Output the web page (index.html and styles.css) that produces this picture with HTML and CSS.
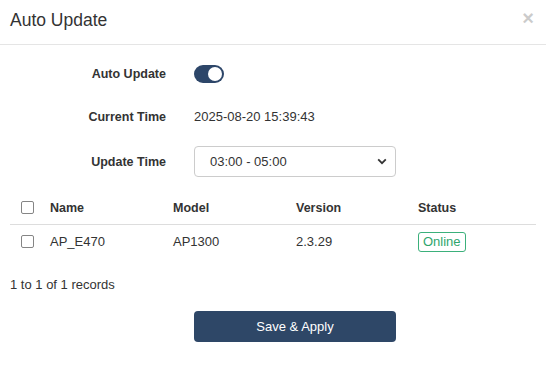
FILE: index.html
```html
<!DOCTYPE html>
<html lang="en">
<head>
  <meta charset="UTF-8">
  <title>Auto Update</title>
  <link rel="stylesheet" href="styles.css">
</head>
<body>
  <div class="modal">
    <div class="modal-header">
      <h4 class="modal-title">Auto Update</h4>
      <button class="close" type="button">&times;</button>
    </div>
    <div class="modal-body">
      <div class="form-row row-toggle">
        <label class="form-label">Auto Update</label>
        <div class="form-value">
          <span class="switch on"><span class="knob"></span></span>
        </div>
      </div>
      <div class="form-row row-time">
        <label class="form-label">Current Time</label>
        <div class="form-value">2025-08-20 15:39:43</div>
      </div>
      <div class="form-row">
        <label class="form-label">Update Time</label>
        <div class="form-value">
          <div class="select">
            <span>03:00 - 05:00</span>
            <svg width="10" height="7" viewBox="0 0 10 7"><path d="M1.2 1.4 L5 5.2 L8.8 1.4" fill="none" stroke="#333" stroke-width="1.8"/></svg>
          </div>
        </div>
      </div>

      <div class="table">
        <div class="tr th">
          <div class="cell"><span class="check"></span></div>
          <div class="cell">Name</div>
          <div class="cell">Model</div>
          <div class="cell">Version</div>
          <div class="cell">Status</div>
        </div>
        <div class="tr">
          <div class="cell"><span class="check"></span></div>
          <div class="cell">AP_E470</div>
          <div class="cell">AP1300</div>
          <div class="cell">2.3.29</div>
          <div class="cell"><span class="badge">Online</span></div>
        </div>
      </div>

      <div class="records">1 to 1 of 1 records</div>

      <div class="actions">
        <button class="btn-primary" type="button">Save &amp; Apply</button>
      </div>
    </div>
  </div>
</body>
</html>
```

FILE: styles.css
```css
body {
  margin: 0;
  font-family: "Liberation Sans", Arial, sans-serif;
  font-size: 13px;
  color: #333;
  background: #fff;
}
.modal {
  width: 546px;
}
.modal-header {
  display: flex;
  justify-content: space-between;
  align-items: center;
  height: 45px;
  padding: 0 10px;
  border-bottom: 1px solid #e5e5e5;
  box-sizing: border-box;
}
.modal-title {
  margin: 0;
  font-size: 17.5px;
  font-weight: normal;
  color: #333;
  position: relative;
  top: -2px;
}
.close {
  border: none;
  background: none;
  padding: 0;
  font-family: "Liberation Sans", Arial, sans-serif;
  font-size: 20px;
  font-weight: bold;
  line-height: 1;
  color: #000;
  opacity: 0.2;
  cursor: pointer;
  position: relative;
  top: -4px;
  right: 2px;
}
.modal-body {
  padding: 13px 10px 0;
}
.form-row {
  display: flex;
  align-items: center;
  height: 31px;
  margin-bottom: 14px;
}
.row-toggle {
  margin-bottom: 11px;
  height: 32px;
}
.form-label {
  width: 156px;
  text-align: right;
  font-weight: bold;
  font-size: 12.5px;
  color: #333;
}
.form-value {
  margin-left: 28px;
  display: flex;
  align-items: center;
}
.switch {
  display: inline-block;
  width: 30px;
  height: 18px;
  border-radius: 9px;
  background: #2d4669;
  position: relative;
}
.switch .knob {
  position: absolute;
  top: 2px;
  right: 2px;
  width: 14px;
  height: 14px;
  border-radius: 50%;
  background: #fff;
}
.select {
  width: 202px;
  height: 31px;
  box-sizing: border-box;
  border: 1px solid #ccc;
  border-radius: 4px;
  display: flex;
  align-items: center;
  justify-content: space-between;
  padding: 0 8px 0 15px;
  color: #333;
}
.table {
  margin-top: 2px;
}
.tr {
  display: grid;
  grid-template-columns: 30px 123px 123px 122px 1fr;
  align-items: center;
  height: 33px;
}
.th {
  font-weight: bold;
  font-size: 12.5px;
  border-bottom: 1px solid #ddd;
}
.cell {
  padding-left: 10px;
}
.tr .cell:first-child {
  padding-left: 11px;
  display: flex;
}
.check {
  display: inline-block;
  width: 13px;
  height: 13px;
  box-sizing: border-box;
  border: 1px solid #858585;
  border-radius: 2px;
  background: #fff;
}
.badge {
  display: inline-block;
  border: 1px solid #3bb07b;
  color: #2fa56d;
  border-radius: 3px;
  padding: 1px 4px;
  line-height: 16px;
}
.records {
  margin-top: 19px;
}
.actions {
  padding-left: 184px;
  margin-top: 19px;
}
.btn-primary {
  width: 202px;
  height: 31px;
  border: none;
  border-radius: 4px;
  background: #2e4767;
  color: #fff;
  font-family: "Liberation Sans", Arial, sans-serif;
  font-size: 13px;
  font-weight: normal;
  cursor: pointer;
}
```
